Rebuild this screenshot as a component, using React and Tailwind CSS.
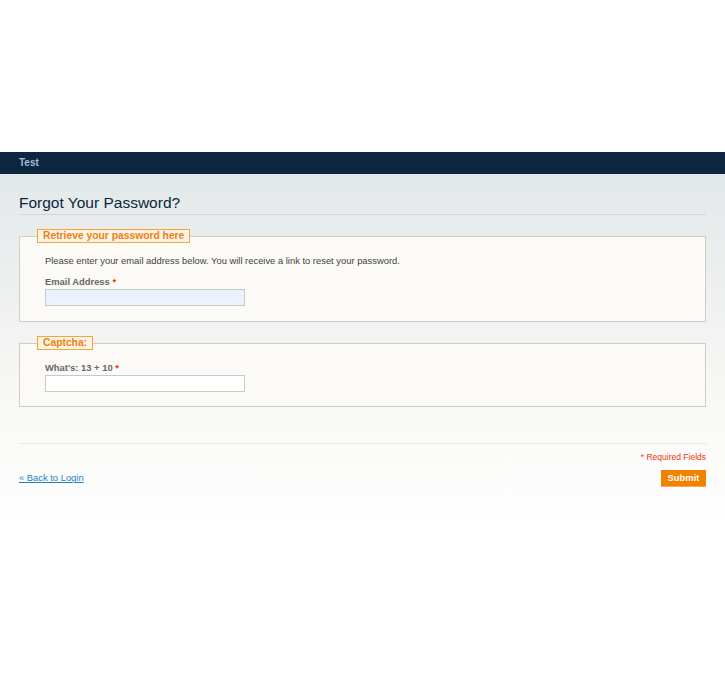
export default function App() {
  const font = { fontFamily: '"Liberation Sans", Arial, sans-serif' }
  return (
    <div className="min-h-[680px] bg-white" style={font}>
      <div className="h-[152px]" />

      {/* Top bar */}
      <div className="h-[22px] bg-[#0b263e] flex items-center px-[19px]">
        <span className="text-[10px] font-bold text-[#a3bdd4] leading-none">Test</span>
      </div>

      {/* Main */}
      <div className="bg-gradient-to-b from-[#e3e8e9] via-[#f7f7f5] via-60% to-white px-[19px] pb-[40px]">
        <div className="pt-[19px] h-[41px] border-b border-[#d3d6d5]">
          <h1 className="text-[15.5px] leading-[20px] text-[#0a263c] font-normal">Forgot Your Password?</h1>
        </div>

        <fieldset className="mt-[14px] border border-[#d3cdc1] bg-[#fbfaf6] px-[17px] pb-[15px]">
          <legend className="px-[5px] h-[14px] leading-[12px] border border-[#f4a43a] bg-[#fbf4e4] text-[#ef7f14] text-[10.3px] font-bold">
            Retrieve your password here
          </legend>
          <div className="ml-2 pt-[12px]">
            <p className="text-[9.4px] leading-[12px] text-[#444]">
              Please enter your email address below. You will receive a link to reset your password.
            </p>
            <label className="block mt-[9px] text-[9.4px] leading-[12px] font-bold text-[#666]">
              Email Address <span className="text-[#eb340a]">*</span>
            </label>
            <input
              type="email"
              className="block mt-[1px] w-[200px] h-[17px] border border-[#c8c8c8] bg-[#eaf3fd] text-[10px] px-1 outline-none"
            />
          </div>
        </fieldset>

        <fieldset className="mt-[14px] border border-[#d3cdc1] bg-[#fbfaf6] px-[17px] pb-[14px]">
          <legend className="px-[5px] h-[14px] leading-[12px] border border-[#f4a43a] bg-[#fbf4e4] text-[#ef7f14] text-[10.3px] font-bold">
            Captcha:
          </legend>
          <div className="ml-2 pt-[12px]">
            <label className="block text-[9.4px] leading-[12px] font-bold text-[#666]">
              What's: 13 + 10 <span className="text-[#eb340a]">*</span>
            </label>
            <input
              type="text"
              className="block mt-[1px] w-[200px] h-[17px] border border-[#c8c8c8] bg-white text-[10px] px-1 outline-none"
            />
          </div>
        </fieldset>

        <div className="mt-[36px] border-t border-[#e6e6e4] pt-[7px]">
          <p className="text-right text-[8.5px] leading-[12px] text-[#eb340a]">* Required Fields</p>
          <div className="mt-[7px] flex items-center justify-between">
            <a href="#" className="text-[9.4px] text-[#1e7ec8] underline">« Back to Login</a>
            <button className="h-[17px] w-[45px] bg-[#f18200] border-b border-[#f7a95a] text-white text-[9.4px] font-bold leading-none">
              Submit
            </button>
          </div>
        </div>
      </div>
    </div>
  )
}
